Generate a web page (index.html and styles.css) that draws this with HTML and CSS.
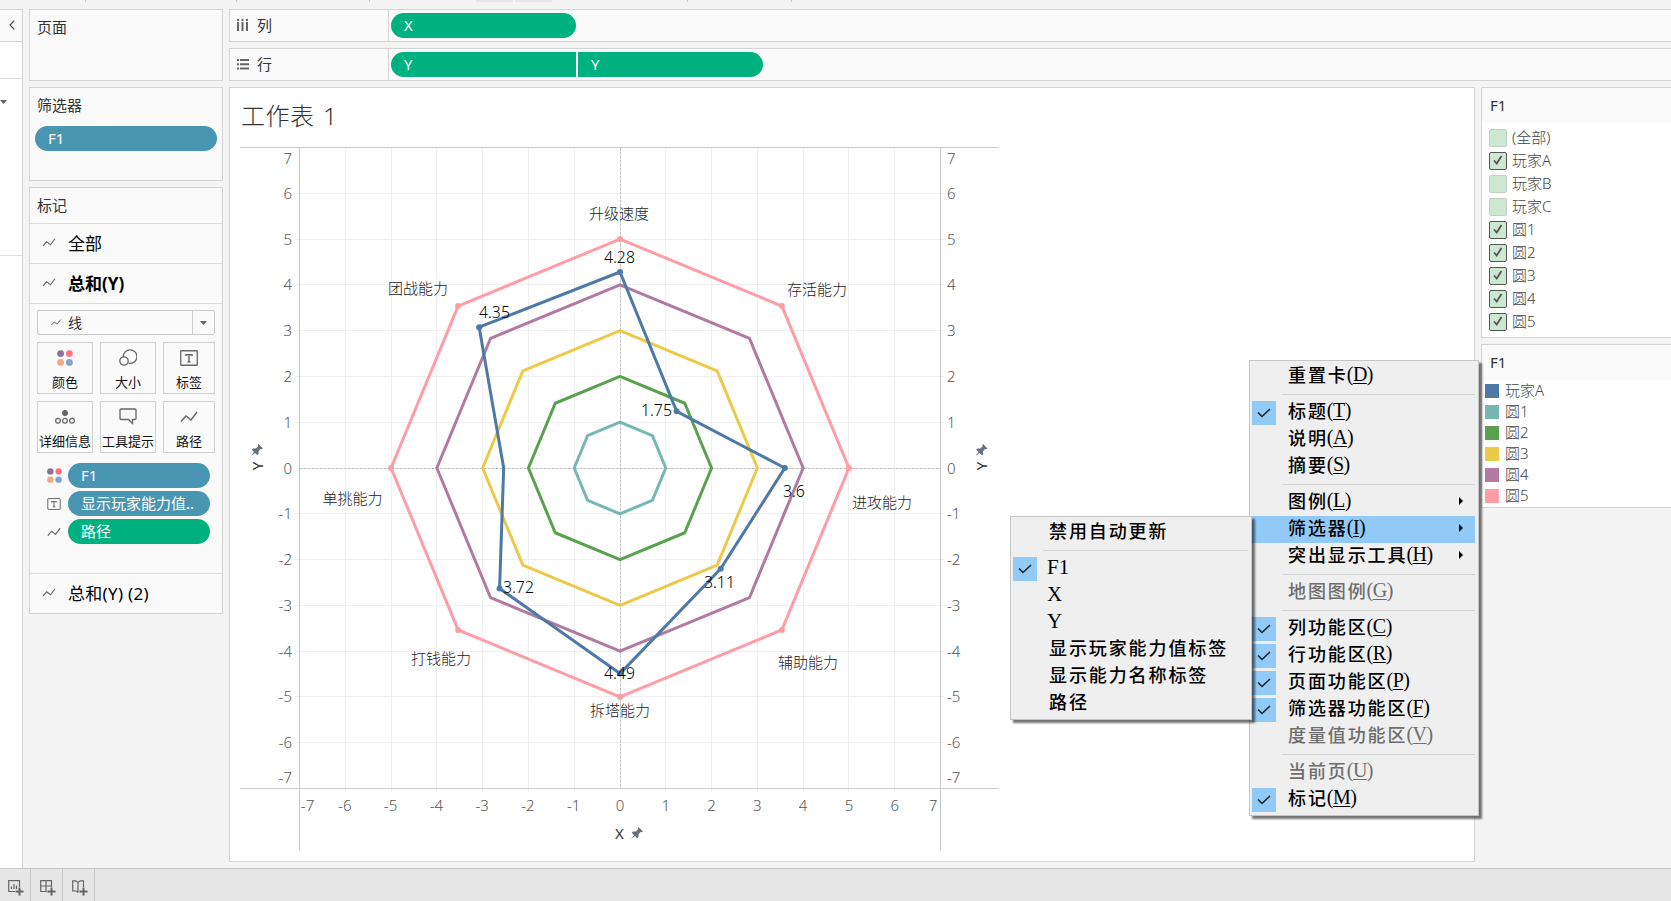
FILE: index.html
```
<!DOCTYPE html>
<html lang="zh-CN">
<head>
  <meta charset="UTF-8">
  <meta name="viewport" content="width=device-width, initial-scale=1.0">
  <title>工作表 1</title>
  <link rel="stylesheet" href="styles.css">
</head>
<body>

  <!-- shared icons -->
  <svg class="defs" width="0" height="0">
    <symbol id="line" viewBox="0 0 18 12"><path d="M1 10.5 6 5l5 4 6-8" fill="none" stroke="currentColor" stroke-width="1.5"/></symbol>
    <symbol id="dots" viewBox="0 0 16 16">
      <circle cx="3.6" cy="3.6" r="3.4" fill="#8a7197"/><circle cx="12.4" cy="3.6" r="3.4" fill="#fb7484"/>
      <circle cx="3.6" cy="12.4" r="3.4" fill="#f2a87c"/><circle cx="12.4" cy="12.4" r="3.4" fill="#80a3cf"/>
    </symbol>
    <symbol id="label" viewBox="0 0 18 16">
      <rect x=".75" y=".75" width="16.5" height="14.5" rx=".5" fill="none" stroke="currentColor" stroke-width="1.3"/>
      <path d="M6 6V4.7h6V6M9 4.7v7M7.4 11.7h3.2" fill="none" stroke="currentColor" stroke-width="1.4"/>
    </symbol>
    <symbol id="check" viewBox="0 0 14 10"><path d="M1 4.5 5 8.5 13 1" fill="none" stroke="#222" stroke-width="1.6"/></symbol>
    <symbol id="tick" viewBox="0 0 10 10"><path d="M1 5.5 3.7 8.5 8.5 1" fill="none" stroke="#555" stroke-width="1.8"/></symbol>
  </svg>

  <div class="toolbar"><i></i><i></i><i></i><b></b><b></b><i></i><i></i></div>

  <div class="workspace">
    <div class="data-pane">
      <div class="collapse"><svg width="6" height="10" viewBox="0 0 6 10"><path d="M5.3.6 1 5l4.3 4.4" fill="none" stroke="#555" stroke-width="1.3"/></svg></div>
      <div class="tab"></div>
      <div class="search"><i class="caret"></i></div>
      <div class="fields"></div>
    </div>

    <div class="shelves">
      <section class="card pages"><h2>页面</h2></section>
      <section class="card filters">
        <h2>筛选器</h2>
        <div class="pill blue">F1</div>
      </section>
      <section class="card marks">
        <h2>标记</h2>
        <div class="mark-row"><svg width="16" height="9"><use href="#line"/></svg>全部</div>
        <div class="mark-row current"><svg width="16" height="9"><use href="#line"/></svg>总和(Y)</div>
        <div class="mark-body">
          <div class="mark-type"><svg width="12" height="7"><use href="#line"/></svg><span>线</span><em><i class="caret"></i></em></div>
          <div class="buttons">
            <div class="btn"><svg width="16" height="16"><use href="#dots"/></svg>颜色</div>
            <div class="btn"><svg width="18" height="17" viewBox="0 0 18 17" fill="none" stroke="#666" stroke-width="1.3"><path d="M4.3 8.1a6.8 6.8 0 1 1 5.2 6.1"/><circle cx="5" cy="12" r="4.2"/></svg>大小</div>
            <div class="btn"><svg width="18" height="16"><use href="#label"/></svg>标签</div>
            <div class="btn"><svg width="20" height="14" viewBox="0 0 20 14" fill="none" stroke="#666" stroke-width="1.2"><circle cx="10" cy="3" r="2.9" fill="#666" stroke="none"/><circle cx="3" cy="10.7" r="2.4"/><circle cx="10" cy="10.7" r="2.4"/><circle cx="17" cy="10.7" r="2.4"/></svg>详细信息</div>
            <div class="btn"><svg width="18" height="17" viewBox="0 0 18 17"><path d="M2 1h14q1 0 1 1v8.500q0 1-1 1h-2.500v4l-4-4H2q-1 0-1-1V2q0-1 1-1z" fill="none" stroke="#666" stroke-width="1.3"/></svg>工具提示</div>
            <div class="btn"><svg width="18" height="12"><use href="#line"/></svg>路径</div>
          </div>
          <div class="encodings">
            <div><svg width="15" height="15"><use href="#dots"/></svg><span class="pill blue">F1</span></div>
            <div><svg width="14" height="12"><use href="#label"/></svg><span class="pill blue">显示玩家能力值..</span></div>
            <div><svg width="14" height="10"><use href="#line"/></svg><span class="pill green">路径</span></div>
          </div>
        </div>
        <div class="mark-row last"><svg width="16" height="9"><use href="#line"/></svg>总和(Y) (2)</div>
      </section>
    </div>

    <main>
      <div class="shelf">
        <div class="name"><svg width="12" height="13" viewBox="0 0 12 13" fill="#666"><path d="M0 0h2v2H0zM4.500 0h2v2h-2zM9 0h2v2H9zM0 3h2v9H0zM4.500 3h2v9h-2zM9 3h2v9H9z"/></svg><span>列</span></div>
        <div class="pill green">X</div>
      </div>
      <div class="shelf">
        <div class="name"><svg width="12" height="11" viewBox="0 0 12 11" fill="#666"><path d="M0 0h2v2H0zM0 4.250h2v2H0zM0 8.500h2v2H0zM3 0h9v2H3zM3 4.250h9v2H3zM3 8.500h9v2H3z"/></svg><span>行</span></div>
        <div class="pill green first">Y</div><div class="pill green second">Y</div>
      </div>
      <div class="content">
        <div class="view">
          <h1>工作表 1</h1>
          <svg id="chart" width="770" height="715" viewBox="236 140 770 715"></svg>
        </div>
        <aside>
          <section class="card filter-card">
            <h3>F1</h3>
            <ul>
              <li><i class="box"></i><span>(全部)</span></li>
              <li><i class="box on"><svg width="10" height="10"><use href="#tick"/></svg></i><span>玩家A</span></li>
              <li><i class="box"></i><span>玩家B</span></li>
              <li><i class="box"></i><span>玩家C</span></li>
              <li><i class="box on"><svg width="10" height="10"><use href="#tick"/></svg></i><span>圆1</span></li>
              <li><i class="box on"><svg width="10" height="10"><use href="#tick"/></svg></i><span>圆2</span></li>
              <li><i class="box on"><svg width="10" height="10"><use href="#tick"/></svg></i><span>圆3</span></li>
              <li><i class="box on"><svg width="10" height="10"><use href="#tick"/></svg></i><span>圆4</span></li>
              <li><i class="box on"><svg width="10" height="10"><use href="#tick"/></svg></i><span>圆5</span></li>
            </ul>
          </section>
          <section class="card legend">
            <h3>F1</h3>
            <ul>
              <li><i class="c-player"></i><span>玩家A</span></li>
              <li><i class="c-1"></i><span>圆1</span></li>
              <li><i class="c-2"></i><span>圆2</span></li>
              <li><i class="c-3"></i><span>圆3</span></li>
              <li><i class="c-4"></i><span>圆4</span></li>
              <li><i class="c-5"></i><span>圆5</span></li>
            </ul>
          </section>
        </aside>
      </div>
    </main>
  </div>

  <footer>
    <div><svg width="16" height="16" viewBox="0 0 16 16" fill="none" stroke="#666"><path d="M7 11.500H.7V.7h10.800V7M3.500 9V6.500M6 9V4M8.500 9V5.500" stroke-width="1.200"/><path d="M7.500 11.500h8M11.500 7.500v8" stroke-width="2"/></svg></div>
    <div><svg width="16" height="16" viewBox="0 0 16 16" fill="none" stroke="#666"><path d="M7 11.500H.7V.7h10.800V7M.7 6h10.800M6 .7v10.800" stroke-width="1.200"/><path d="M7.500 11.500h8M11.500 7.500v8" stroke-width="2"/></svg></div>
    <div><svg width="16" height="16" viewBox="0 0 16 16" fill="none" stroke="#666"><path d="M6 12.500 4.500 11H.7V.8h3L6 2.500 8.300.8h3.200V7M6 2.500v10" stroke-width="1.200"/><path d="M7.500 11.500h8M11.500 7.500v8" stroke-width="2"/></svg></div>
  </footer>

  <ul class="menu card-menu">
    <li>重置卡<span>(<u>D</u>)</span></li>
    <li class="sep"></li>
    <li class="checked"><svg width="14" height="10"><use href="#check"/></svg>标题<span>(<u>T</u>)</span></li>
    <li>说明<span>(<u>A</u>)</span></li>
    <li>摘要<span>(<u>S</u>)</span></li>
    <li class="sep"></li>
    <li class="sub">图例<span>(<u>L</u>)</span></li>
    <li class="sub active">筛选器<span>(<u>I</u>)</span></li>
    <li class="sub">突出显示工具<span>(<u>H</u>)</span></li>
    <li class="sep"></li>
    <li class="disabled">地图图例<span>(<u>G</u>)</span></li>
    <li class="sep"></li>
    <li class="checked"><svg width="14" height="10"><use href="#check"/></svg>列功能区<span>(<u>C</u>)</span></li>
    <li class="checked"><svg width="14" height="10"><use href="#check"/></svg>行功能区<span>(<u>R</u>)</span></li>
    <li class="checked"><svg width="14" height="10"><use href="#check"/></svg>页面功能区<span>(<u>P</u>)</span></li>
    <li class="checked"><svg width="14" height="10"><use href="#check"/></svg>筛选器功能区<span>(<u>F</u>)</span></li>
    <li class="disabled">度量值功能区<span>(<u>V</u>)</span></li>
    <li class="sep"></li>
    <li class="disabled">当前页<span>(<u>U</u>)</span></li>
    <li class="checked"><svg width="14" height="10"><use href="#check"/></svg>标记<span>(<u>M</u>)</span></li>
  </ul>

  <ul class="menu filter-menu">
    <li>禁用自动更新</li>
    <li class="sep"></li>
    <li class="checked"><svg width="14" height="10"><use href="#check"/></svg><span>F1</span></li>
    <li><span>X</span></li>
    <li><span>Y</span></li>
    <li>显示玩家能力值标签</li>
    <li>显示能力名称标签</li>
    <li>路径</li>
  </ul>

  <script src="chart.js"></script>
</body>
</html>
```
FILE: styles.css
```
* {
  box-sizing: border-box;
}
body {
  margin: 0;
  width: 1671px;
  height: 901px;
  overflow: hidden;
  position: relative;
  display: flex;
  flex-direction: column;
  background: #f4f4f4;
  color: #333;
  font: 15px/20px "Noto Sans", "Noto Sans CJK SC", sans-serif;
}
h1, h2, h3, ul {
  margin: 0;
  padding: 0;
  font-weight: 400;
  list-style: none;
}
.defs {
  position: absolute;
}
svg {
  display: block;
  flex: none;
}

/* bottom edge of the toolbar */
.toolbar {
  height: 9px;
  display: flex;
  align-items: flex-start;
  flex: none;
}
.toolbar i {
  width: 1px;
  height: 2px;
  background: #ccc;
  margin-left: 85px;
}
.toolbar i + i { margin-left: 150px; }
.toolbar i:nth-child(3) { margin-left: 132px; }
.toolbar b {
  width: 37px;
  height: 2px;
  background: #e6e6e6;
  margin-left: 2px;
}
.toolbar i + b { margin-left: 106px; }
.toolbar b + i { margin-left: 135px; }
.toolbar i:last-child { margin-left: 103px; }

.workspace {
  display: flex;
  height: 859px;
}

.data-pane {
  width: 23px;
  border-right: 1px solid #d4d4d4;
  background: #fff;
  flex: none;
}
.collapse {
  height: 33px;
  background: #fafafa;
  border: 1px solid #d4d4d4;
  border-width: 1px 0;
  padding: 10px 0 0 9px;
}
.tab {
  height: 37px;
  border-bottom: 1px solid #e0e0e0;
}
.search {
  height: 177px;
  border-bottom: 1px solid #e0e0e0;
  padding-top: 21px;
}
.caret {
  display: block;
  width: 7px;
  height: 4px;
  background: #666;
  clip-path: polygon(0 0, 100% 0, 50% 100%);
}

.card {
  background: #fafafa;
  border: 1px solid #d4d4d4;
}
.shelves {
  width: 206px;
  padding: 0 6px;
  display: flex;
  flex-direction: column;
  gap: 6px;
  flex: none;
}
.shelves h2 {
  font-size: 15px;
  line-height: 20px;
  padding: 7px 7px 1px;
}
.pages { height: 72px; }
.filters { height: 94px; }
.marks { height: 427px; }

.pill {
  height: 25px;
  line-height: 24px;
  border-radius: 13px;
  padding-left: 14px;
  color: #fff;
  white-space: nowrap;
}
.blue { background: #4996b2; }
.green { background: #00b180; }
.filters .pill { margin: 10px 5px; padding-left: 13px; }

.marks h2 {
  height: 35px;
}
.mark-row {
  height: 40px;
  border-top: 1px solid #dcdcdc;
  display: flex;
  align-items: center;
  gap: 11px;
  padding: 0 0 0 11px;
  font-size: 17px;
  color: #000;
}
.mark-row svg, .mark-type svg, .btn svg, .encodings svg {
  color: #666;
}
.mark-row svg {
  margin-top: -3px;
}
.current {
  font-weight: 700;
}
.last {
  letter-spacing: .3px;
}
.mark-body {
  height: 270px;
  border-top: 1px solid #dcdcdc;
  padding: 6px 7px 0;
}
.mark-type {
  width: 178px;
  height: 25px;
  border: 1px solid #ccc;
  border-radius: 2px;
  display: flex;
  align-items: center;
  padding-left: 12px;
  gap: 6px;
}
.mark-type span {
  flex: 1;
  font-size: 14px;
}
.mark-type em {
  width: 22px;
  height: 23px;
  border-left: 1px solid #ccc;
  padding: 10px 0 0 7px;
}
.buttons {
  display: grid;
  grid-template-columns: 56px 56px 52px;
  grid-auto-rows: 52px;
  gap: 7px;
  margin-top: 7px;
}
.btn {
  border: 1px solid #d0d0d0;
  display: flex;
  flex-direction: column;
  align-items: center;
  justify-content: flex-end;
  padding-bottom: 1px;
  font-size: 13px;
  line-height: 20px;
  color: #111;
  white-space: nowrap;
}
.btn svg {
  margin: auto;
}
.encodings {
  margin: 10px 0 0 10px;
  display: flex;
  flex-direction: column;
  gap: 3px;
}
.encodings div {
  display: flex;
  align-items: center;
}
.encodings svg {
  margin-right: auto;
}
.encodings .pill {
  width: 142px;
  padding-left: 13px;
  margin-right: 5px;
}

main {
  flex: none;
  width: 1460px;
  display: flex;
  flex-direction: column;
  gap: 6px;
}
.shelf {
  height: 33px;
  background: #fafafa;
  border: 1px solid #d4d4d4;
  display: flex;
  align-items: center;
}
.name {
  width: 159px;
  height: 31px;
  border-right: 1px solid #d4d4d4;
  margin-right: 2px;
  padding-left: 7px;
  display: flex;
  align-items: center;
  gap: 8px;
}
.name span {
  padding-bottom: 2px;
}
.shelf .pill {
  width: 185px;
  padding-left: 13px;
}
.shelf .first {
  border-radius: 13px 0 0 13px;
}
.shelf .second {
  margin-left: 2px;
  border-radius: 0 13px 13px 0;
}
.content {
  display: flex;
  gap: 6px;
  height: 775px;
}
.view {
  flex: none;
  width: 1246px;
  background: #fff;
  border: 1px solid #d4d4d4;
  padding-left: 6px;
}
.view h1 {
  font-size: 24px;
  font-weight: 300;
  letter-spacing: .5px;
  word-spacing: 2px;
  line-height: 32px;
  height: 52px;
  padding: 12px 0 0 5px;
}
aside {
  flex: none;
  width: 220px;
  display: flex;
  flex-direction: column;
  gap: 6px;
}
.filter-card, .legend {
  background: #fff;
}
.filter-card { height: 251px; }
.legend { height: 164px; }
aside h3 {
  height: 35px;
  background: #fafafa;
  font-size: 15px;
  line-height: 34px;
  padding-left: 8px;
}
aside ul {
  color: #444;
  font-weight: 300;
}
aside li span {
  padding-bottom: 2px;
}
.filter-card ul {
  padding: 3px 0 0 7px;
}
.filter-card li {
  height: 23px;
  display: flex;
  align-items: center;
  gap: 5px;
}
.box {
  width: 18px;
  height: 18px;
  background: #cde8d0;
  border: 1px solid #c3cec4;
  border-radius: 2px;
  padding: 2px 0 0 3px;
}
.box.on {
  border-color: #555;
}
.legend li {
  height: 21px;
  display: flex;
  align-items: center;
  gap: 6px;
  padding-left: 3px;
}
.legend i {
  width: 14px;
  height: 14px;
}
.c-player { background: #4e79a7; }
.c-1 { background: #76b7b2; }
.c-2 { background: #59a14f; }
.c-3 { background: #edc948; }
.c-4 { background: #b07aa1; }
.c-5 { background: #ff9da7; }

/* chart */
.grid { stroke: #f0f0f0; }
.axis { stroke: #c9c9c9; }
.zero { stroke: #c0c0c0; stroke-dasharray: 3 1; }
.ring { fill: none; stroke-width: 3; stroke-linejoin: round; }
.tick { fill: #555; font-size: 15px; font-weight: 300; }
.value { fill: #000; font-size: 15.8px; font-weight: 300; }
.ability { fill: #222; font-size: 15px; font-weight: 300; }
.axis-title { fill: #333; font-size: 15px; text-anchor: middle; }
.pin { fill: #667180; }

footer {
  height: 33px;
  border-top: 1px solid #c8c8c8;
  background: #e6e6e6;
  display: flex;
}
footer div {
  width: 32px;
  border-right: 1px solid #c8c8c8;
  padding: 11px 0 0 9px;
}
footer div:first-child {
  width: 31px;
  padding-left: 8px;
}

/* context menus float over the sheet */
.menu {
  position: absolute;
  background: #efefef;
  border: 1px solid #c6c6c6;
  padding: 2px 3px 2px 2px;
  box-shadow: 3px 3px 2px rgba(0, 0, 0, .55);
  color: #000;
  font-family: KaiTi, "Noto Sans CJK SC", sans-serif;
  font-size: 18px;
  font-weight: 500;
  letter-spacing: 1.9px;
}
.card-menu {
  left: 1249px;
  top: 360px;
  width: 230px;
}
.filter-menu {
  left: 1010px;
  top: 516px;
  width: 242px;
}
.menu li {
  height: 27px;
  line-height: 22px;
  padding-left: 36px;
  display: flex;
  white-space: nowrap;
  position: relative;
}
.menu span {
  font-family: "Liberation Serif", serif;
  font-size: 20px;
  font-weight: 400;
  letter-spacing: -.5px;
  margin-left: -1px;
}
.filter-menu span {
  font-size: 21px;
  letter-spacing: 0;
  margin-left: -2px;
  padding-top: 1px;
}
.menu u {
  text-underline-offset: 2px;
  text-decoration-thickness: 1px;
}
.menu .sep {
  height: 9px;
  padding: 0;
}
.menu .sep::before {
  content: "";
  height: 1px;
  flex: 1;
  margin: 4px 0 0 30px;
  background: #d4d4d4;
}
.checked svg {
  position: absolute;
  left: 0;
  top: 2px;
  width: 24px;
  height: 24px;
  padding: 7px 5px;
  background: #91c9f7;
}
.active { background: #91c9f7; }
.disabled { color: #6d6d6d; }
.sub::after {
  content: "";
  margin: 8px 12px 0 auto;
  width: 4px;
  height: 8px;
  background: #000;
  clip-path: polygon(0 0, 100% 50%, 0 100%);
}
```
FILE: chart.js
```
const svg = document.getElementById('chart');
const CX = 620, CY = 468, UNIT = 45.79;
const LEFT = 299.5, RIGHT = 940.5, TOP = 147.5, BOTTOM = 788.5;

function add(tag, attrs, text) {
  const el = document.createElementNS('http://www.w3.org/2000/svg', tag);
  for (const k in attrs) el.setAttribute(k, attrs[k]);
  if (text !== undefined) el.textContent = text;
  svg.appendChild(el);
}
function line(cls, x1, y1, x2, y2) {
  add('line', { class: cls, x1, y1, x2, y2 });
}
// clockwise from the top, one value for each ability
function points(values) {
  return values.map((v, i) => {
    const a = i * Math.PI / 4;
    return [CX + v * UNIT * Math.sin(a), CY - v * UNIT * Math.cos(a)];
  });
}

// gridlines
for (let i = -6; i <= 6; i++) {
  if (i === 0) continue;
  const x = Math.floor(CX + i * UNIT) + 0.5;
  const y = Math.floor(CY - i * UNIT) + 0.5;
  line('grid', x, TOP, x, BOTTOM + 4);
  line('grid', LEFT - 5, y, RIGHT + 4, y);
}
line('zero', CX + 0.5, TOP, CX + 0.5, BOTTOM);
line('zero', LEFT, CY + 0.5, RIGHT, CY + 0.5);

// axes
line('axis', 240, TOP, 999, TOP);
line('axis', 240, BOTTOM, 999, BOTTOM);
line('axis', LEFT, TOP, LEFT, 850.5);
line('axis', RIGHT, TOP, RIGHT, 850.5);

// tick labels, the end ones are pulled inside
for (let i = -7; i <= 7; i++) {
  let y = CY - i * UNIT + 5.5;
  if (i === 7) y = 164;
  if (i === -7) y = 783;
  let x = CX + i * UNIT - (i < 0 ? 0.5 : 0);
  if (i === 7) x = 933;
  if (i === -7) x = 307.5;
  add('text', { class: 'tick', x: 292, y, 'text-anchor': 'end' }, i);
  add('text', { class: 'tick', x: 947, y }, i);
  add('text', { class: 'tick', x, y: 810.5, 'text-anchor': 'middle' }, i);
}

// rings
const colors = ['#76b7b2', '#59a14f', '#edc948', '#b07aa1', '#ff9da7'];
colors.forEach((stroke, i) => {
  add('polygon', { class: 'ring', stroke, points: points(Array(8).fill(i + 1)).join(' ') });
});
points(Array(8).fill(5)).forEach(([cx, cy]) => add('circle', { cx, cy, r: 3, fill: '#ff9da7' }));

// player
const player = points([4.28, 1.75, 3.6, 3.11, 4.49, 3.72, 2.54, 4.35]);
add('polygon', { class: 'ring', stroke: '#4e79a7', points: player.join(' ') });
player.forEach(([cx, cy], i) => {
  if (i !== 6) add('circle', { cx, cy, r: 3, fill: '#4e79a7' });
});

[
  ['4.28', 604, 263], ['1.75', 641, 416], ['3.6', 783, 497], ['3.11', 704, 588],
  ['4.49', 604, 679], ['3.72', 503, 593], ['4.35', 479, 318],
].forEach(([t, x, y]) => add('text', { class: 'value', x, y }, t));

[
  ['升级速度', 589, 218.5], ['存活能力', 787, 294.5], ['进攻能力', 852, 507.5], ['辅助能力', 778, 667.5],
  ['拆塔能力', 590, 715.5], ['打钱能力', 411, 663.5], ['单挑能力', 322.5, 503.5], ['团战能力', 388, 293.5],
].forEach(([t, x, y]) => add('text', { class: 'ability', x, y }, t));

// axis titles and pins
const PIN = 'M1.500-6 6-1.500 4.500-.8 3.500-1 1.500 1.200 1.600 4 .3 5.300-2 3-6 6-3 2-5.300-.3-4-1.600-1.200-1.500 1-3.500.8-4.500z';
add('text', { class: 'axis-title', x: 619.5, y: 838.5 }, 'X');
add('path', { class: 'pin', d: PIN, transform: 'translate(637 833)' });
[257, 981.5].forEach(x => {
  add('text', { class: 'axis-title', transform: `translate(${x + 5.5} 466) rotate(-90)` }, 'Y');
  add('path', { class: 'pin', d: PIN, transform: `translate(${x} 450)` });
});
```
